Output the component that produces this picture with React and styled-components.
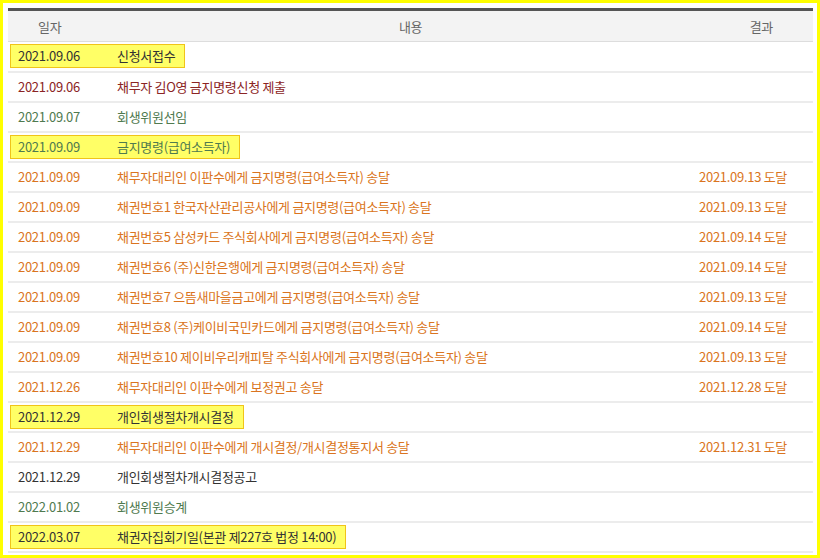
import React from 'react';
import styled, { createGlobalStyle } from 'styled-components';

const Global = createGlobalStyle`
  html, body { margin: 0; padding: 0; background: #fff; }
  body { font-family: "Noto Sans CJK KR", "Noto Sans", sans-serif; }
`;

const Frame = styled.div`
  width: 820px;
  height: 558px;
  box-sizing: border-box;
  border: 3px solid #ffff00;
  padding: 5px 5px 0 5px;
  overflow: hidden;
`;

const Table = styled.table`
  width: 805px;
  border-collapse: collapse;
  border-top: 3px solid #555;
  font-size: 13px;
  letter-spacing: -0.3px;
`;

const Th = styled.th`
  height: 30px;
  background: #f3f3f3;
  color: #666;
  font-weight: normal;
  text-align: ${p => p.$align || 'center'};
  padding: ${p => p.$pad || '0'};
  border-bottom: 1px solid #ddd;
`;

const colors = {
  black: '#333',
  red: '#8b2424',
  green: '#4f7a4f',
  orange: '#da7420',
};

const Tr = styled.tr`
  height: 30px;
  color: ${p => colors[p.$tone]};
  td { border-bottom: 2px solid #ececec; }
`;

const Td = styled.td`
  padding: ${p => p.$pad || '0'};
  white-space: nowrap;
`;

const Mark = styled.span`
  display: inline-flex;
  background: #ffff66;
  border: 1.5px solid #f0c419;
  padding: 2px 9px 2px 7px;
  margin-left: -8px;
  line-height: 18px;
`;

const DateCol = styled.span`
  display: inline-block;
  width: 99px;
`;

const rows = [
  ['2021.09.06', '신청서접수', '', 'black', true],
  ['2021.09.06', '채무자 김O영 금지명령신청 제출', '', 'red'],
  ['2021.09.07', '회생위원선임', '', 'green'],
  ['2021.09.09', '금지명령(급여소득자)', '', 'green', true],
  ['2021.09.09', '채무자대리인 이판수에게 금지명령(급여소득자) 송달', '2021.09.13 도달', 'orange'],
  ['2021.09.09', '채권번호1 한국자산관리공사에게 금지명령(급여소득자) 송달', '2021.09.13 도달', 'orange'],
  ['2021.09.09', '채권번호5 삼성카드 주식회사에게 금지명령(급여소득자) 송달', '2021.09.14 도달', 'orange'],
  ['2021.09.09', '채권번호6 (주)신한은행에게 금지명령(급여소득자) 송달', '2021.09.14 도달', 'orange'],
  ['2021.09.09', '채권번호7 으뜸새마을금고에게 금지명령(급여소득자) 송달', '2021.09.13 도달', 'orange'],
  ['2021.09.09', '채권번호8 (주)케이비국민카드에게 금지명령(급여소득자) 송달', '2021.09.14 도달', 'orange'],
  ['2021.09.09', '채권번호10 제이비우리캐피탈 주식회사에게 금지명령(급여소득자) 송달', '2021.09.13 도달', 'orange'],
  ['2021.12.26', '채무자대리인 이판수에게 보정권고 송달', '2021.12.28 도달', 'orange'],
  ['2021.12.29', '개인회생절차개시결정', '', 'black', true],
  ['2021.12.29', '채무자대리인 이판수에게 개시결정/개시결정통지서 송달', '2021.12.31 도달', 'orange'],
  ['2021.12.29', '개인회생절차개시결정공고', '', 'black'],
  ['2022.01.02', '회생위원승계', '', 'green'],
  ['2022.03.07', '채권자집회기일(본관 제227호 법정 14:00)', '', 'black', true],
];

export default function App() {
  return (
    <Frame>
      <Global />
      <Table>
        <thead>
          <tr>
            <Th $align="left" $pad="0 0 0 30px">일자 <span style={{ display: 'inline-block', width: 335 }} />내용</Th>
            <Th $align="right" $pad="0 40px 0 0">결과</Th>
          </tr>
        </thead>
        <tbody>
          {rows.map(([d, c, r, tone, hl], i) => (
            <Tr key={i} $tone={tone}>
              <Td $pad="0 0 0 10px">
                {hl ? (
                  <Mark><DateCol>{d}</DateCol>{c}</Mark>
                ) : (
                  <><DateCol>{d}</DateCol>{c}</>
                )}
              </Td>
              <Td $pad="0 26px 0 0" style={{ textAlign: 'right' }}>{r}</Td>
            </Tr>
          ))}
        </tbody>
      </Table>
    </Frame>
  );
}
